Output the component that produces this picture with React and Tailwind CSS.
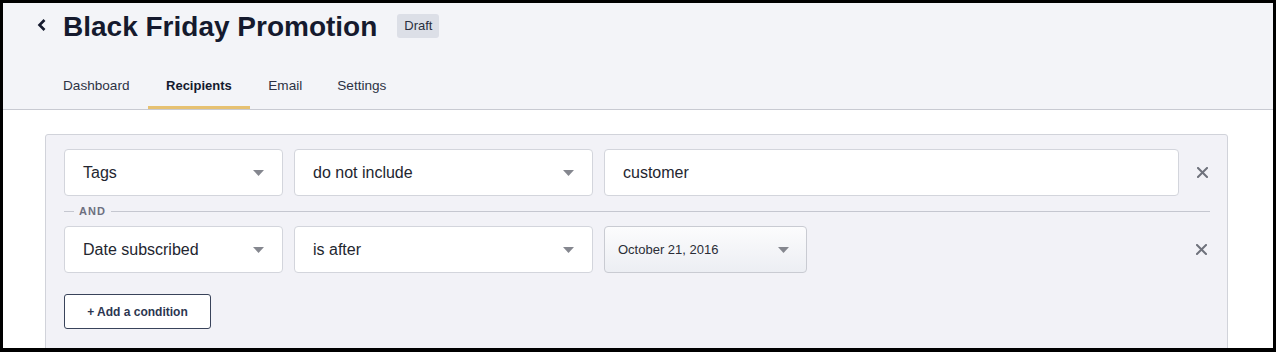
import React from "react";

const font = { fontFamily: '"Liberation Sans", Arial, sans-serif' };

function Caret({ className = "" }) {
  return (
    <svg width="11" height="6" viewBox="0 0 11 6" className={className}>
      <path d="M0 0 L11 0 L5.5 6 Z" fill="#85878f" />
    </svg>
  );
}

function XIcon() {
  return (
    <svg width="11" height="11" viewBox="0 0 11 11">
      <path d="M1 1 L10 10 M10 1 L1 10" stroke="#6f727c" strokeWidth="2" strokeLinecap="square" />
    </svg>
  );
}

function Select({ label, width }) {
  return (
    <div
      className={`${width} h-[47px] shrink-0 bg-white border border-[#d3d5dc] rounded-[4px] flex items-center justify-between pl-[18px] pr-[18px]`}
    >
      <span className="text-[16px] text-[#23262f]">{label}</span>
      <Caret />
    </div>
  );
}

const tabs = [
  { t: "Dashboard", cls: "pl-[19px] pr-[18px]" },
  { t: "Recipients", cls: "px-[18.5px]" },
  { t: "Email", cls: "px-[18px]" },
  { t: "Settings", cls: "pl-[17px] pr-[18px]" },
];

export default function App() {
  return (
    <div
      className="w-[1276px] h-[352px] border-[3px] border-b-[4px] border-black bg-white overflow-hidden flex flex-col"
      style={font}
    >
      <div className="h-[107px] shrink-0 bg-[#f3f4f8] border-b border-[#c8cad2] flex flex-col">
        <div className="flex items-center h-[46px] pt-[1px]">
          <div className="w-[34px] shrink-0" />
          <svg width="10" height="14" viewBox="0 0 10 14" className="mt-[-4px]">
            <path d="M7.5 2 L2.5 7 L7.5 12" stroke="#151a2e" strokeWidth="2.6" fill="none" />
          </svg>
          <h1 className="ml-[16px] text-[28px] font-bold text-[#151a2e] leading-none">
            Black Friday Promotion
          </h1>
          <span className="ml-[20px] mt-[-2px] h-[24px] px-[7px] rounded-[3px] bg-[#dcdfe7] text-[13px] text-[#2a2f40] flex items-center">
            Draft
          </span>
        </div>
        <div className="flex mt-auto pl-[41px]">
          {tabs.map(({ t, cls }) => {
            const active = t === "Recipients";
            return (
              <div
                key={t}
                className={`${cls} h-[46px] flex items-center pt-[3px] border-b-[3px] ${
                  active
                    ? "border-[#e6c172] font-bold text-[#141a2e] text-[13px]"
                    : "border-transparent text-[#2d3244] text-[13.6px]"
                }`}
              >
                {t}
              </div>
            );
          })}
        </div>
      </div>

      <div className="flex-1 pt-[24px] pl-[42px] pr-[45px]">
        <div className="bg-[#f2f2f7] border border-[#d1d3da] rounded-[3px] h-[240px] pt-[14px] pl-[18px] pr-[17px]">
          <div className="flex items-center">
            <Select label="Tags" width="w-[219px]" />
            <div className="w-[11px] shrink-0" />
            <Select label="do not include" width="w-[299px]" />
            <div className="w-[11px] shrink-0" />
            <div className="w-[575px] h-[47px] shrink-0 bg-white border border-[#d3d5dc] rounded-[4px] flex items-center pl-[18px] text-[16px] text-[#23262f]">
              customer
            </div>
            <div className="ml-[18px] flex items-center">
              <XIcon />
            </div>
          </div>

          <div className="flex items-center h-[30px]">
            <div className="w-[10px] h-px bg-[#c5c7d0]" />
            <span className="mx-[5px] text-[11px] font-bold tracking-[1px] text-[#6d7080]">AND</span>
            <div className="flex-1 h-px bg-[#c5c7d0]" />
          </div>

          <div className="flex items-center">
            <Select label="Date subscribed" width="w-[219px]" />
            <div className="w-[11px] shrink-0" />
            <Select label="is after" width="w-[299px]" />
            <div className="w-[11px] shrink-0" />
            <div className="w-[203px] h-[47px] shrink-0 border border-[#c9cbd2] rounded-[4px] bg-gradient-to-b from-[#fcfcfd] to-[#eceef3] flex items-center justify-between pl-[13px] pr-[17px]">
              <span className="text-[13px] text-[#2a2d36]">October 21, 2016</span>
              <Caret />
            </div>
            <div className="ml-auto mr-[3px] flex items-center">
              <XIcon />
            </div>
          </div>

          <button className="mt-[21px] w-[147px] h-[35px] bg-white border border-[#39435a] rounded-[3px] text-[12px] font-bold text-[#2c3651] flex items-center justify-center">
            + Add a condition
          </button>
        </div>
      </div>
    </div>
  );
}
